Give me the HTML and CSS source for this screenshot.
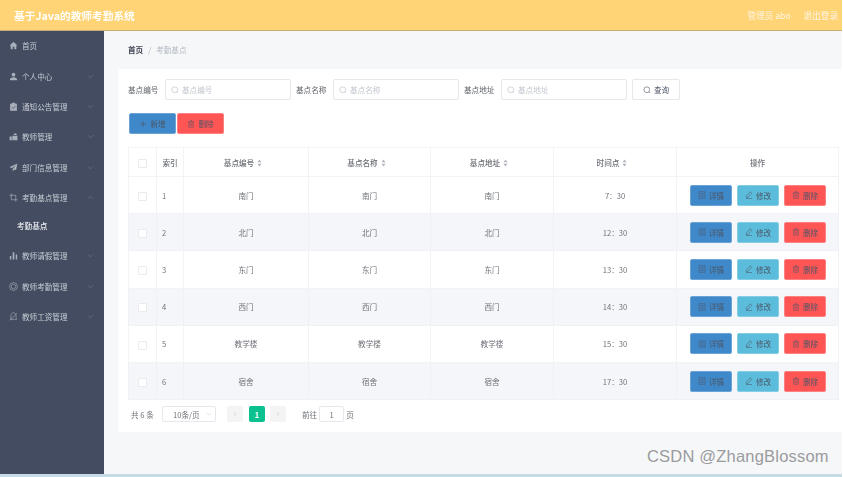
FILE: index.html
```html
<!DOCTYPE html>
<html lang="en">
<head>
    <meta charset="UTF-8">
    <title>基于Java的教师考勤系统</title>
    <link rel="stylesheet" href="styles.css">
</head>
<body>
<svg class="icon-defs" aria-hidden="true">
    <symbol id="i-search" viewBox="0 0 16 16"><circle cx="7.5" cy="7.5" r="5.8" fill="none" stroke="currentColor" stroke-width="1.2"/><path d="M11.5 11.5l2.5 2.5" fill="none" stroke="currentColor" stroke-width="1.2"/></symbol>
    <symbol id="i-down" viewBox="0 0 16 16"><path d="M2 5l6 6 6-6" fill="none" stroke="currentColor" stroke-width="1.2"/></symbol>
    <symbol id="i-up" viewBox="0 0 16 16"><path d="M2 11l6-6 6 6" fill="none" stroke="currentColor" stroke-width="1.2"/></symbol>
    <symbol id="i-left" viewBox="0 0 16 16"><path d="M10.5 3l-5 5 5 5" fill="none" stroke="currentColor" stroke-width="1.5"/></symbol>
    <symbol id="i-right" viewBox="0 0 16 16"><path d="M5.5 3l5 5-5 5" fill="none" stroke="currentColor" stroke-width="1.5"/></symbol>
    <symbol id="i-trash" viewBox="0 0 16 16"><path d="M1.5 4h13M6 4V1.500h4V4M3.500 4v10.500h9V4M6.500 6.500v5.500M9.500 6.500v5.500" fill="none" stroke="currentColor" stroke-width="1.100"/></symbol>
    <symbol id="i-doc" viewBox="0 0 16 16"><path d="M2 1.500h12v13H2zM5 5h6M5 8h6M5 11h6" fill="none" stroke="currentColor" stroke-width="1.100"/></symbol>
    <symbol id="i-edit" viewBox="0 0 16 16"><path d="M10.500 1.500l3 3-7.500 8-3.500.5.500-3.500zM2 15h12" fill="none" stroke="currentColor" stroke-width="1.100"/></symbol>
    <symbol id="i-plus" viewBox="0 0 16 16"><path d="M8 2v12M2 8h12" fill="none" stroke="currentColor" stroke-width="1.300"/></symbol>
    <symbol id="i-sort" viewBox="0 0 8 14"><path d="M4 1l3.500 4.500h-7zM4 13L.5 8.500h7z" fill="currentColor"/></symbol>
    <symbol id="i-home" viewBox="0 0 16 16"><path d="M8 1.500L1 8h2v6.500h3.500V10h3v4.500H13V8h2z" fill="currentColor"/></symbol>
    <symbol id="i-user" viewBox="0 0 16 16"><circle cx="8" cy="4.800" r="3.300" fill="currentColor"/><path d="M1.500 14.500c0-3.500 3-5 6.500-5s6.500 1.500 6.500 5z" fill="currentColor"/></symbol>
    <symbol id="i-clip" viewBox="0 0 16 16"><path d="M2 3h3V1.500h6V3h3v12.500H2z" fill="currentColor"/><path d="M5 9l2.500 2.500L11.500 7" fill="none" stroke="#434c60" stroke-width="1.300"/></symbol>
    <symbol id="i-brief" viewBox="0 0 16 16"><path d="M1 8h4v6.500H1zM6 6.500h9v8H6zM9 2.500h4l1 3H8z" fill="currentColor"/></symbol>
    <symbol id="i-plane" viewBox="0 0 16 16"><path d="M15 1L1 7l4 2.500L12 4l-5.500 6.500V15l3-3.500 3 1.500z" fill="currentColor"/></symbol>
    <symbol id="i-crop" viewBox="0 0 16 16"><path d="M4 1v11h11M1 4h11v11" fill="none" stroke="currentColor" stroke-width="1.200"/></symbol>
    <symbol id="i-bars" viewBox="0 0 16 16"><path d="M1.500 9h2.500v6H1.500zM6.500 2h3v13h-3zM12 6h2.500v9H12z" fill="currentColor"/></symbol>
    <symbol id="i-smile" viewBox="0 0 16 16"><circle cx="8" cy="8" r="7" fill="none" stroke="currentColor" stroke-width="1.100"/><circle cx="8" cy="8" r="4" fill="none" stroke="currentColor" stroke-width="1.100"/></symbol>
    <symbol id="i-bell" viewBox="0 0 16 16"><path d="M8 1.500c-3 0-4.500 2.500-4.500 5V11L2 13h12l-1.500-2V6.500C12.500 4 11 1.500 8 1.500zM2 15L14 2" fill="none" stroke="currentColor" stroke-width="1.100"/></symbol>
</svg>

<div class="page">
    <header class="topbar">
        <div class="topbar-title">基于Java的教师考勤系统</div>
        <div class="topbar-user">
            <span>管理员 abo</span>
            <span>退出登录</span>
        </div>
    </header>

    <div class="main">
        <aside class="sidebar">
            <ul>
                <li class="menu-item"><svg class="menu-icon"><use href="#i-home"/></svg>首页</li>
                <li class="menu-item"><svg class="menu-icon"><use href="#i-user"/></svg>个人中心<svg class="menu-arrow"><use href="#i-down"/></svg></li>
                <li class="menu-item"><svg class="menu-icon"><use href="#i-clip"/></svg>通知公告管理<svg class="menu-arrow"><use href="#i-down"/></svg></li>
                <li class="menu-item"><svg class="menu-icon"><use href="#i-brief"/></svg>教师管理<svg class="menu-arrow"><use href="#i-down"/></svg></li>
                <li class="menu-item"><svg class="menu-icon"><use href="#i-plane"/></svg>部门信息管理<svg class="menu-arrow"><use href="#i-down"/></svg></li>
                <li class="menu-item"><svg class="menu-icon"><use href="#i-crop"/></svg>考勤基点管理<svg class="menu-arrow"><use href="#i-up"/></svg></li>
                <li class="menu-sub">考勤基点</li>
                <li class="menu-item"><svg class="menu-icon"><use href="#i-bars"/></svg>教师请假管理<svg class="menu-arrow"><use href="#i-down"/></svg></li>
                <li class="menu-item"><svg class="menu-icon"><use href="#i-smile"/></svg>教师考勤管理<svg class="menu-arrow"><use href="#i-down"/></svg></li>
                <li class="menu-item"><svg class="menu-icon"><use href="#i-bell"/></svg>教师工资管理<svg class="menu-arrow"><use href="#i-down"/></svg></li>
            </ul>
        </aside>

        <section class="content">
            <div class="crumb">
                <b>首页</b><i>/</i><span>考勤基点</span>
            </div>

            <div class="card">
                <div class="search-row">
                    <label>基点编号</label>
                    <div class="input"><svg class="input-icon"><use href="#i-search"/></svg>基点编号</div>
                    <label>基点名称</label>
                    <div class="input"><svg class="input-icon"><use href="#i-search"/></svg>基点名称</div>
                    <label>基点地址</label>
                    <div class="input"><svg class="input-icon"><use href="#i-search"/></svg>基点地址</div>
                    <button class="btn btn-plain"><svg class="btn-icon"><use href="#i-search"/></svg>查询</button>
                </div>

                <div class="action-row">
                    <button class="btn btn-blue btn-big"><svg class="btn-icon"><use href="#i-plus"/></svg>新增</button>
                    <button class="btn btn-red btn-big"><svg class="btn-icon"><use href="#i-trash"/></svg>删除</button>
                </div>

                <table class="grid">
                    <colgroup>
                        <col class="col-check"><col class="col-index"><col class="col-a"><col class="col-b"><col class="col-c"><col class="col-d"><col>
                    </colgroup>
                    <thead>
                    <tr>
                        <th><span class="check"></span></th>
                        <th>索引</th>
                        <th>基点编号<svg class="sort"><use href="#i-sort"/></svg></th>
                        <th>基点名称<svg class="sort"><use href="#i-sort"/></svg></th>
                        <th>基点地址<svg class="sort"><use href="#i-sort"/></svg></th>
                        <th>时间点<svg class="sort"><use href="#i-sort"/></svg></th>
                        <th>操作</th>
                    </tr>
                    </thead>
                    <tbody>
                    <tr>
                        <td><span class="check"></span></td><td class="left">1</td><td>南门</td><td>南门</td><td>南门</td><td>7：30</td>
                        <td><div class="ops"><button class="btn btn-blue"><svg class="btn-icon"><use href="#i-doc"/></svg>详情</button><button class="btn btn-teal"><svg class="btn-icon"><use href="#i-edit"/></svg>修改</button><button class="btn btn-red"><svg class="btn-icon"><use href="#i-trash"/></svg>删除</button></div></td>
                    </tr>
                    <tr>
                        <td><span class="check"></span></td><td class="left">2</td><td>北门</td><td>北门</td><td>北门</td><td>12：30</td>
                        <td><div class="ops"><button class="btn btn-blue"><svg class="btn-icon"><use href="#i-doc"/></svg>详情</button><button class="btn btn-teal"><svg class="btn-icon"><use href="#i-edit"/></svg>修改</button><button class="btn btn-red"><svg class="btn-icon"><use href="#i-trash"/></svg>删除</button></div></td>
                    </tr>
                    <tr>
                        <td><span class="check"></span></td><td class="left">3</td><td>东门</td><td>东门</td><td>东门</td><td>13：30</td>
                        <td><div class="ops"><button class="btn btn-blue"><svg class="btn-icon"><use href="#i-doc"/></svg>详情</button><button class="btn btn-teal"><svg class="btn-icon"><use href="#i-edit"/></svg>修改</button><button class="btn btn-red"><svg class="btn-icon"><use href="#i-trash"/></svg>删除</button></div></td>
                    </tr>
                    <tr>
                        <td><span class="check"></span></td><td class="left">4</td><td>西门</td><td>西门</td><td>西门</td><td>14：30</td>
                        <td><div class="ops"><button class="btn btn-blue"><svg class="btn-icon"><use href="#i-doc"/></svg>详情</button><button class="btn btn-teal"><svg class="btn-icon"><use href="#i-edit"/></svg>修改</button><button class="btn btn-red"><svg class="btn-icon"><use href="#i-trash"/></svg>删除</button></div></td>
                    </tr>
                    <tr>
                        <td><span class="check"></span></td><td class="left">5</td><td>教学楼</td><td>教学楼</td><td>教学楼</td><td>15：30</td>
                        <td><div class="ops"><button class="btn btn-blue"><svg class="btn-icon"><use href="#i-doc"/></svg>详情</button><button class="btn btn-teal"><svg class="btn-icon"><use href="#i-edit"/></svg>修改</button><button class="btn btn-red"><svg class="btn-icon"><use href="#i-trash"/></svg>删除</button></div></td>
                    </tr>
                    <tr>
                        <td><span class="check"></span></td><td class="left">6</td><td>宿舍</td><td>宿舍</td><td>宿舍</td><td>17：30</td>
                        <td><div class="ops"><button class="btn btn-blue"><svg class="btn-icon"><use href="#i-doc"/></svg>详情</button><button class="btn btn-teal"><svg class="btn-icon"><use href="#i-edit"/></svg>修改</button><button class="btn btn-red"><svg class="btn-icon"><use href="#i-trash"/></svg>删除</button></div></td>
                    </tr>
                    </tbody>
                </table>

                <div class="pager">
                    <span class="pager-total">共 6 条</span>
                    <div class="pager-size">10条/页<svg class="pager-arrow"><use href="#i-down"/></svg></div>
                    <span class="pager-btn"><svg class="pager-chev"><use href="#i-left"/></svg></span>
                    <span class="pager-btn pager-on">1</span>
                    <span class="pager-btn"><svg class="pager-chev"><use href="#i-right"/></svg></span>
                    <span class="pager-goto">前往</span>
                    <span class="pager-num">1</span>
                    <span class="pager-unit">页</span>
                </div>
            </div>
        </section>
    </div>
    <div class="bottom-line"></div>
</div>

<div class="watermark">CSDN @ZhangBlossom</div>
</body>
</html>
```

FILE: styles.css
```css
html, body {
    margin: 0;
    padding: 0;
    background: #fff;
}

body {
    font-family: "Noto Sans CJK SC", "Liberation Sans", sans-serif;
    font-size: 7.6px;
    color: #606266;
    overflow: hidden;
}

ul, li {
    margin: 0;
    padding: 0;
    list-style: none;
}

.icon-defs {
    display: none;
}

/* the reference is a scaled down capture, so everything is a little soft */
.page {
    width: 842px;
    height: 477px;
    display: flex;
    flex-direction: column;
    filter: blur(0.35px);
}

.topbar {
    height: 30px;
    flex: none;
    background: #ffd476;
    border-bottom: 1px solid #c9ad72;
    display: flex;
    align-items: center;
    justify-content: space-between;
    padding: 0 4px 0 14px;
    color: #fff;
}

.topbar-title {
    font-size: 10.7px;
    font-weight: 700;
}

.topbar-user {
    display: flex;
    gap: 13px;
    font-size: 8.6px;
    color: #fdf6e6;
}

.main {
    flex: 1;
    display: flex;
    min-height: 0;
}

.sidebar {
    width: 104px;
    flex: none;
    background: #434c60;
    color: #c6cbd4;
}

.menu-item {
    height: 30.4px;
    display: flex;
    align-items: center;
    padding-left: 9px;
}

.menu-item:first-child {
    height: 29px;
    margin-bottom: 1px;
}

.menu-icon {
    width: 9px;
    height: 9px;
    margin-right: 4px;
    color: #a9afba;
    flex: none;
}

.menu-arrow {
    width: 7px;
    height: 7px;
    margin-left: auto;
    margin-right: 10px;
    color: #7d8595;
}

.menu-sub {
    height: 27.5px;
    line-height: 26px;
    padding-left: 17px;
    color: #eceef1;
    font-weight: 500;
}

.content {
    flex: 1;
    background: #f6f7f9;
    padding-left: 14px;
    min-width: 0;
}

.crumb {
    height: 36px;
    padding: 0 0 2px 10px;
    display: flex;
    align-items: center;
    color: #b4bac5;
}

.crumb b {
    color: #404552;
    font-weight: 700;
}

.crumb i {
    font-style: normal;
    margin: 0 5px;
    color: #b0b5bf;
}

.card {
    background: #fff;
    height: 363px;
    padding: 10px 3px 0 10px;
    box-sizing: border-box;
}

.search-row {
    display: flex;
    align-items: center;
    height: 21px;
}

.search-row label {
    width: 37px;
    flex: none;
    color: #5f6368;
}

.input {
    width: 126px;
    height: 21px;
    box-sizing: border-box;
    border: 1px solid #e6e8ee;
    border-radius: 2px;
    margin-right: 5px;
    display: flex;
    align-items: center;
    padding-left: 5px;
    color: #c3c7cf;
}

.input-icon {
    width: 8px;
    height: 8px;
    margin-right: 3px;
    color: #b5b9c2;
}

.action-row {
    display: flex;
    gap: 1px;
    margin: 13px 0 13px 1px;
}

.btn {
    height: 21px;
    width: 42px;
    padding: 0;
    box-sizing: border-box;
    border: 1px solid transparent;
    border-radius: 2px;
    display: flex;
    align-items: center;
    justify-content: center;
    font-family: inherit;
    font-size: 7.6px;
    color: #4d5666;
}

.btn-big {
    width: 47px;
}

.btn-icon {
    width: 8px;
    height: 8px;
    margin-right: 3px;
}

.btn-plain {
    width: 48px;
    background: #fff;
    border-color: #e6e8ee;
}

.btn-blue {
    background: #3f88c9;
    border-color: #6aa3d5;
}

.btn-teal {
    background: #5bbcdc;
    border-color: #84cde5;
}

.btn-red {
    background: #ff5555;
    border-color: #ff8080;
}

.grid {
    width: 711px;
    border-collapse: collapse;
    table-layout: fixed;
    border: 1px solid #f1f3f7;
}

.col-check {
    width: 28px;
}

.col-index {
    width: 27px;
}

.col-a {
    width: 125px;
}

.col-b {
    width: 122px;
}

.col-c,
.col-d {
    width: 123px;
}

.grid th,
.grid td {
    padding: 0;
    text-align: center;
    border: 1px solid #f1f3f7;
    font-weight: 400;
}

.grid th {
    height: 28px;
    color: #6c7077;
    font-weight: 500;
}

.grid td {
    height: 36.2px;
    color: #6e7278;
}

.grid tbody tr:nth-child(even) td {
    background: #f4f6fa;
    border-color: #f0f1f5;
}

.grid td.left {
    text-align: left;
    padding-left: 5px;
}

.check {
    display: inline-block;
    width: 7px;
    height: 7px;
    background: #fff;
    border: 1px solid #e9ebef;
    border-radius: 1px;
    vertical-align: middle;
}

.sort {
    width: 5px;
    height: 8px;
    margin: 0 6px 0 3px;
    color: #b0b4bb;
    vertical-align: -1px;
}

.ops {
    display: flex;
    gap: 5px;
    padding-left: 13px;
}

.pager {
    display: flex;
    align-items: center;
    height: 16px;
    margin-top: 6px;
    padding-left: 3px;
    color: #6e7278;
}

.pager-total {
    width: 31px;
}

.pager-size {
    width: 54px;
    height: 16px;
    box-sizing: border-box;
    border: 1px solid #e6e8ee;
    border-radius: 2px;
    display: flex;
    align-items: center;
    padding-left: 10px;
    margin-right: 11px;
}

.pager-arrow {
    width: 6px;
    height: 6px;
    margin-left: auto;
    margin-right: 3px;
    color: #c0c4cc;
}

.pager-btn {
    width: 16px;
    height: 16px;
    background: #f4f4f5;
    border-radius: 2px;
    margin-right: 5px;
    display: flex;
    align-items: center;
    justify-content: center;
    color: #c0c4cc;
}

.pager-size + .pager-btn {
    margin-right: 6px;
}

.pager-chev {
    width: 6px;
    height: 6px;
}

.pager-on {
    background: #0bc190;
    color: #fff;
    font-weight: 700;
}

.pager-goto {
    margin-left: 11px;
    margin-right: 2px;
}

.pager-num {
    width: 25px;
    height: 16px;
    box-sizing: border-box;
    border: 1px solid #e6e8ee;
    border-radius: 2px;
    display: flex;
    align-items: center;
    justify-content: center;
    margin-right: 2px;
}

.bottom-line {
    height: 3px;
    flex: none;
    background: #c5dce6;
}

/* sits over the page, like the site stamp on the picture */
.watermark {
    position: absolute;
    left: 647px;
    top: 447px;
    font-family: "Liberation Sans", sans-serif;
    font-size: 16.5px;
    color: #9a9b9d;
    letter-spacing: 0.2px;
}
```
